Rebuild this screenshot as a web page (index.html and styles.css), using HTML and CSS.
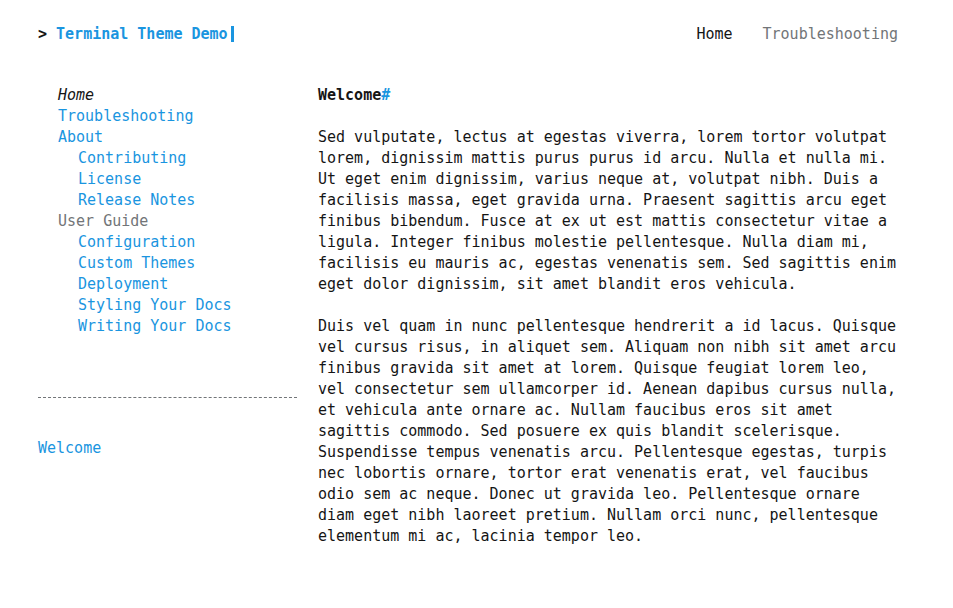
FILE: index.html
```html
<!DOCTYPE html>
<html>
<head>
<meta charset="utf-8">
<link rel="stylesheet" href="styles.css">
</head>
<body>
<div class="page">
  <header class="top">
    <div class="logo"><span class="prompt">&gt;</span> <span class="title">Terminal Theme Demo</span><span class="cursor"></span></div>
    <nav class="menu">
      <a class="menu-item current" href="#">Home</a>
      <a class="menu-item" href="#">Troubleshooting</a>
    </nav>
  </header>
  <div class="layout">
    <aside class="side">
      <ul class="nav">
        <li><span class="active">Home</span></li>
        <li><a href="#">Troubleshooting</a></li>
        <li><a href="#">About</a>
          <ul class="nav sub">
            <li><a href="#">Contributing</a></li>
            <li><a href="#">License</a></li>
            <li><a href="#">Release Notes</a></li>
          </ul>
        </li>
        <li><span class="section">User Guide</span>
          <ul class="nav sub">
            <li><a href="#">Configuration</a></li>
            <li><a href="#">Custom Themes</a></li>
            <li><a href="#">Deployment</a></li>
            <li><a href="#">Styling Your Docs</a></li>
            <li><a href="#">Writing Your Docs</a></li>
          </ul>
        </li>
      </ul>
      <hr class="divider">
      <ul class="toc">
        <li><a href="#">Welcome</a></li>
      </ul>
    </aside>
    <main class="content">
      <h1 class="heading">Welcome<a class="anchor" href="#">#</a></h1>
      <p>Sed vulputate, lectus at egestas viverra, lorem tortor volutpat lorem, dignissim mattis purus purus id arcu. Nulla et nulla mi. Ut eget enim dignissim, varius neque at, volutpat nibh. Duis a facilisis massa, eget gravida urna. Praesent sagittis arcu eget finibus bibendum. Fusce at ex ut est mattis consectetur vitae a ligula. Integer finibus molestie pellentesque. Nulla diam mi, facilisis eu mauris ac, egestas venenatis sem. Sed sagittis enim eget dolor dignissim, sit amet blandit eros vehicula.</p>
      <p>Duis vel quam in nunc pellentesque hendrerit a id lacus. Quisque vel cursus risus, in aliquet sem. Aliquam non nibh sit amet arcu finibus gravida sit amet at lorem. Quisque feugiat lorem leo, vel consectetur sem ullamcorper id. Aenean dapibus cursus nulla, et vehicula ante ornare ac. Nullam faucibus eros sit amet sagittis commodo. Sed posuere ex quis blandit scelerisque. Suspendisse tempus venenatis arcu. Pellentesque egestas, turpis nec lobortis ornare, tortor erat venenatis erat, vel faucibus odio sem ac neque. Donec ut gravida leo. Pellentesque ornare diam eget nibh laoreet pretium. Nullam orci nunc, pellentesque elementum mi ac, lacinia tempor leo.</p>
    </main>
  </div>
</div>
</body>
</html>
```
FILE: styles.css
```css
html, body {
  margin: 0;
  padding: 0;
  background: #fff;
}
body {
  font-family: "DejaVu Sans Mono", "Liberation Mono", monospace;
  font-size: 15px;
  line-height: 21px;
  color: #151515;
}
a {
  color: #1a95e0;
  text-decoration: none;
}
.page {
  width: 860px;
  padding: 24px 0 0 38px;
}
.top {
  display: flex;
  justify-content: space-between;
  align-items: center;
  height: 21px;
}
.logo {
  font-weight: bold;
  white-space: pre;
}
.prompt { color: #151515; }
.title { color: #1a95e0; }
.cursor {
  display: inline-block;
  width: 3px;
  height: 16px;
  margin-left: 3px;
  background: #1a95e0;
  vertical-align: -3px;
}
.menu {
  display: flex;
  gap: 30px;
}
.menu-item { color: #727578; }
.menu-item.current { color: #151515; }
.layout {
  display: flex;
  gap: 21px;
  margin-top: 40px;
}
.side {
  width: 259px;
  flex: none;
}
.nav {
  list-style: none;
  margin: 0;
  padding: 0 0 0 20px;
}
.nav.sub { padding-left: 20px; }
.active { font-style: italic; color: #151515; }
.section { color: #727578; }
.divider {
  border: 0;
  border-top: 1px dashed #727578;
  margin: 60px 0 40px;
  height: 0;
}
.toc {
  list-style: none;
  margin: 0;
  padding: 0;
}
.content {
  width: 580px;
  flex: none;
}
.heading {
  font-size: 15px;
  line-height: 21px;
  font-weight: bold;
  margin: 0 0 21px;
}
.content p {
  margin: 0 0 21px;
}
```
